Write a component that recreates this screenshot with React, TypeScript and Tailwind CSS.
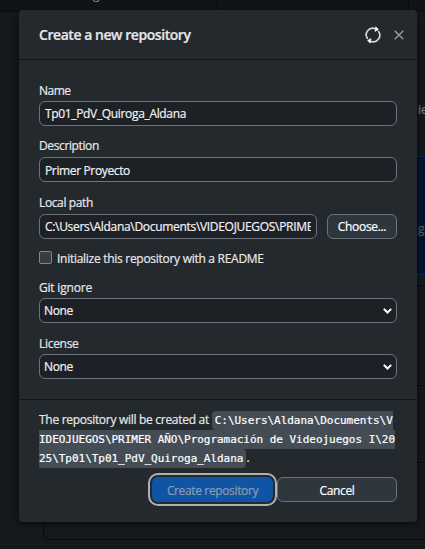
import React from "react";

const field =
  "h-[25px] w-full rounded-[6px] border border-[#6a737d] bg-[#1d2025] text-[12px] text-[#f0f2f4]";

function Label({ children, className = "" }: { children: React.ReactNode; className?: string }) {
  return <div className={`h-[20px] leading-[18px] ${className}`}>{children}</div>;
}

function SelectBox() {
  return (
    <div className={`${field} flex items-center justify-between pr-[4px] pl-[4px]`}>
      <span className="tracking-[-0.4px]">None</span>
      <svg width="9" height="6" viewBox="0 0 9 6" fill="none" stroke="#fff" strokeWidth="2">
        <path d="M0.8 0.9 4.5 4.5 8.2 0.9" />
      </svg>
    </div>
  );
}

function Backdrop() {
  return (
    <div className="absolute inset-0 text-[12px]">
      <div className="absolute inset-x-0 top-0 h-[12px] border-b border-[#0b0d0f] bg-[#111417]" />
      <div className="absolute top-0 left-[217px] h-[11px] w-px bg-[#08090a]" />
      <div className="absolute top-0 left-[408px] h-[11px] w-px bg-[#08090a]" />
      <span className="absolute top-[-13px] left-[93px] leading-[16px] text-[#858789]">g</span>
      <span className="absolute top-[102px] left-[418px] leading-[16px] text-[#7d7f81]">ie</span>
      <div className="absolute top-[156px] left-[400px] h-[119px] w-[40px] border-y border-[#032d57] bg-[#03142d]" />
      <span className="absolute top-[221px] left-[418px] leading-[16px] text-[#555d68]">g</span>
      <div className="absolute top-[285px] left-[400px] h-px w-[30px] bg-[#0a0c0e]" />
      <div className="absolute top-[385px] left-[400px] h-px w-[30px] bg-[#0a0c0e]" />
      <div className="absolute top-[462px] left-[400px] h-px w-[30px] bg-[#0a0c0e]" />
      <div className="absolute top-[500px] left-[43px] h-[40px] w-[400px] rounded-bl-[6px] border-b border-l border-[#0a0c0e]" />
    </div>
  );
}

export default function App() {
  return (
    <div className="relative h-[549px] w-[425px] overflow-hidden bg-[#15191c] pt-[10px] pl-[19px] font-['Open_Sans','Noto_Sans',sans-serif] text-[12px] text-[#e6e8ea] [-webkit-text-stroke-width:0.2px]">
      <Backdrop />
      <div className="relative flex h-[512px] w-[398px] flex-col rounded-[4px] bg-[#24292d] shadow-[0_2px_7px_rgba(0,0,0,0.6)]">
        <div className="flex h-[50px] items-center border-b border-[#121518] pr-[13px] pl-[20px]">
          <h1 className="flex-1 text-[14px] font-semibold tracking-[-0.45px] whitespace-nowrap">Create a new repository</h1>
          <svg className="mr-[13px]" width="16" height="18" viewBox="0 0 16 18" fill="none" stroke="#d8dadc" strokeWidth="1.6">
            <path d="M2.8 13A6.6 6.6 0 0 1 10.6 2.8" />
            <path d="M13.2 5A6.6 6.6 0 0 1 5.4 15.2" />
            <path d="M10.8 0.8 13.4 3.6 10 5.4Z" fill="#fff" stroke="#fff" strokeWidth="0.6" />
            <path d="M5.2 17.2 2.6 14.4 6 12.6Z" fill="#fff" stroke="#fff" strokeWidth="0.6" />
          </svg>
          <svg width="10" height="10" viewBox="0 0 10 10" stroke="#959da5" strokeWidth="1.4">
            <path d="M0.7 0.7 9.3 9.3M9.3 0.7 0.7 9.3" />
          </svg>
        </div>

        <div className="flex h-[340px] flex-col border-b border-[#121518] px-[20px] pt-[21px]">
          <Label className="pt-px tracking-[-0.5px]">Name</Label>
          <div className={`${field} flex items-center pl-[5px] pt-px tracking-[-0.34px]`}>Tp01_PdV_Quiroga_Aldana</div>
          <Label className="mt-[11px] tracking-[-0.38px]">Description</Label>
          <div className={`${field} flex items-center pl-[5px] pt-[2px] tracking-[-0.36px]`}>Primer Proyecto</div>
          <Label className="mt-[12px] tracking-[-0.38px]">Local path</Label>
          <div className="flex gap-[10px]">
            <div className={`${field} flex items-center px-[5px]`}>
              <span className="w-[266px] overflow-hidden tracking-[-0.31px] whitespace-nowrap">
                C:\Users\Aldana\Documents\VIDEOJUEGOS\PRIME
              </span>
            </div>
            <div className="flex h-[25px] w-[70px] shrink-0 items-center justify-center rounded-[6px] border border-[#6a737d] bg-[#2f363d] tracking-[-0.33px] text-white">
              Choose...
            </div>
          </div>
          <div className="mt-[12px] flex h-[13px] items-center gap-[5px]">
            <span className="size-[13px] rounded-[2px] border border-[#858585] bg-[#3b3b3b]" />
            <span className="pt-[3px] leading-[16px] tracking-[-0.28px] whitespace-nowrap">Initialize this repository with a README</span>
          </div>
          <Label className="mt-[14px] pt-px tracking-[-0.2px]">Git ignore</Label>
          <SelectBox />
          <Label className="mt-[11px] pt-px tracking-[-0.3px]">License</Label>
          <SelectBox />
        </div>

        <div className="flex flex-1 flex-col px-[20px] pt-[10px]">
          <div className="h-[67px] text-[12px] leading-[19px] whitespace-nowrap">
            <span className="tracking-[-0.29px]">The repository will be created at </span>
            <code className="rounded-[4px] bg-[#444d56] px-[3px] py-[3px] font-['DejaVu_Sans_Mono',monospace] text-[11px] leading-[15px] tracking-[-0.03px] text-white">
              C:\Users\Aldana\Documents\V
              <br />
              IDEOJUEGOS\PRIMER AÑO\Programación de Videojuegos I\20
              <br />
              25\Tp01\Tp01_PdV_Quiroga_Aldana
            </code>
            .
          </div>
          <div className="flex justify-end gap-[4px]">
            <div className="flex h-[25px] w-[121px] items-center justify-center rounded-[6px] bg-[#1055a5] pt-[2px] tracking-[-0.36px] text-[#8d9bab] outline-2 outline-offset-[2px] outline-[#b0b0b0]">
              Create repository
            </div>
            <div className="flex h-[25px] w-[120px] items-center justify-center rounded-[6px] border border-[#6a737d] bg-[#2f363d] pt-[2px] tracking-[-0.35px] text-white">
              Cancel
            </div>
          </div>
        </div>
      </div>
    </div>
  );
}
